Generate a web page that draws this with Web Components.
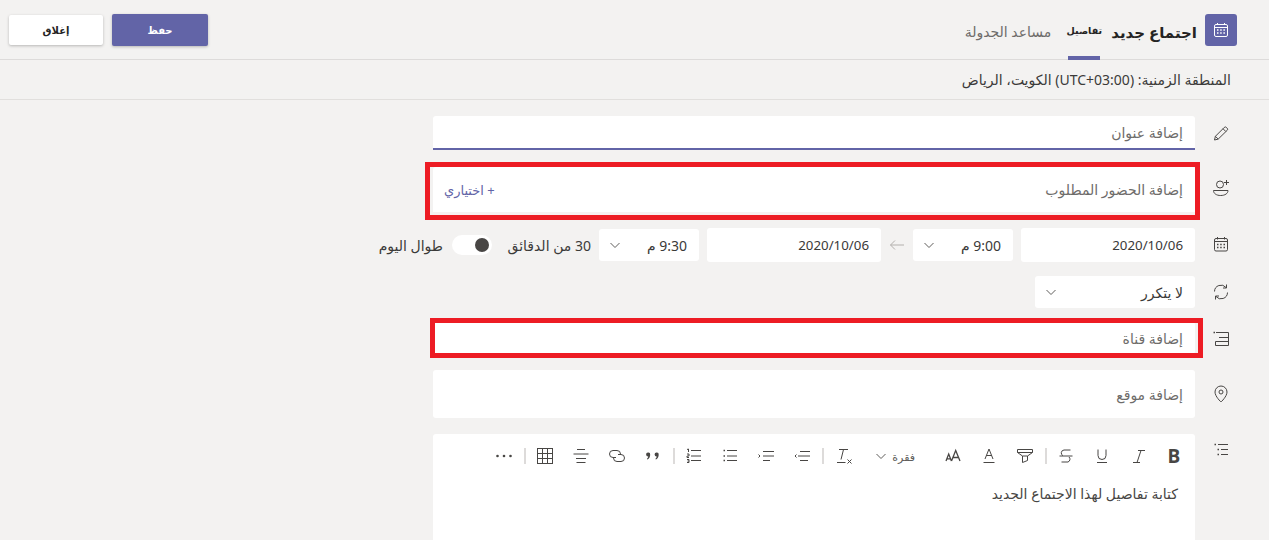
<!DOCTYPE html>
<html lang="ar" dir="rtl">
<head>
<meta charset="utf-8">
<title>اجتماع جديد</title>
<style>
html,body{margin:0;padding:0;background:#f3f2f1;height:100%;overflow:hidden}
body{font:14px "Noto Sans","Open Sans","DejaVu Sans",sans-serif;color:#3b3a39}
</style>
</head>
<body>
<meeting-form></meeting-form>
<script>
const S='fill="none" stroke="#484644" stroke-width="1"';
const ICONS={
 calendarW:`<svg width="16" height="16" viewBox="0 0 16 16" fill="none" stroke="#fff"><rect x="1.5" y="2.5" width="13" height="12" rx="1.5"/><path d="M1.5 5.5h13M4.5 1v2M11.5 1v2"/><path stroke-width="1.6" d="M4 8h1.5M7.2 8h1.5M10.4 8h1.5M4 11h1.5M7.2 11h1.5M10.4 11h1.5"/></svg>`,
 pencil:`<svg width="20" height="20" viewBox="0 0 20 20" ${S}><path d="M3.500 17l.9-3.700L13.200 4.500a1.600 1.600 0 0 1 2.300 0l.6.600a1.600 1.600 0 0 1 0 2.300L7.200 16.100z"/><path d="M4.400 13.300l2.800 2.800M12 5.700l2.800 2.800"/></svg>`,
 person:`<svg width="20" height="20" viewBox="0 0 20 20" ${S}><circle cx="9" cy="5.500" r="3.500"/><path d="M2.500 11.500h14.500c0 3-3 5-7.300 5s-7.200-2-7.200-5z"/><path d="M15.500 1v5M13 3.500h5"/></svg>`,
 calendar:`<svg width="20" height="20" viewBox="0 0 20 20" ${S}><rect x="3.500" y="3.500" width="13" height="12.500" rx="1.500"/><path d="M3.500 6.500h13M6.500 2v2.500M13.500 2v2.500"/><path stroke-width="1.500" d="M6 9.500h1.500M9.200 9.500h1.500M12.500 9.500h1.500M6 12.500h1.500M9.200 12.500h1.500M12.500 12.500h1.500"/></svg>`,
 repeat:`<svg width="20" height="20" viewBox="0 0 20 20" ${S}><path d="M3.500 9.500A6.500 6.500 0 0 1 15 5.500M15.500 2.500V6H12"/><path d="M16.500 10.500A6.500 6.500 0 0 1 5 14.500M4.500 17.500V14H8"/></svg>`,
 channel:`<svg width="20" height="20" viewBox="0 0 20 20" ${S}><path d="M5 4.500H17.500V17.500H4.500V13.500H17.500M8 9.500H17.500"/><path stroke-width="1.500" d="M2.500 4.500H4"/></svg>`,
 pin:`<svg width="20" height="20" viewBox="0 0 20 20" ${S}><path d="M10 18S4 12.500 4 8a6 6 0 0 1 12 0c0 4.500-6 10-6 10z"/><circle cx="10" cy="8" r="2"/></svg>`,
 list:`<svg width="20" height="20" viewBox="0 0 20 20" ${S}><path d="M7 4.500h10M10 9.500h7M10 14.500h7"/><path stroke-width="1.500" d="M3.500 4.500H5M6.500 9.500H8M6.500 14.500H8"/></svg>`,
 chev:`<svg width="12" height="12" viewBox="0 0 12 12" fill="none" stroke="#605e5c"><path d="M1.500 4l4.500 4.500L10.500 4"/></svg>`,
 arrow:`<svg width="16" height="12" viewBox="0 0 16 12" fill="none" stroke="#b3b0ad"><path d="M15 6H1.500M6 1.500L1.500 6 6 10.500"/></svg>`,
 italic:`<svg width="20" height="20" viewBox="0 0 20 20" ${S}><path d="M10 4.500h7M5 16.500h7M13 4.500L9 16.500"/></svg>`,
 underline:`<svg width="20" height="20" viewBox="0 0 20 20" ${S}><path d="M6 3.500v6a4 4 0 0 0 8 0v-6M5 16.500h10"/></svg>`,
 strike:`<svg width="20" height="20" viewBox="0 0 20 20" ${S}><path d="M14.500 4H8a3 3 0 0 0-1 5.700M3.500 10h13M13 11a3 3 0 0 1-1 5H5.500"/></svg>`,
 marker:`<svg width="20" height="20" viewBox="0 0 20 20" ${S}><path d="M2.500 3.500h15v3L12.500 10v4.500L7.500 16.500V10L2.500 6.500zM2.500 6.500h15M7.500 10h5"/></svg>`,
 fontcolor:`<svg width="20" height="20" viewBox="0 0 20 20" ${S}><path d="M6 13L10 3l4 10M7.300 9.500h5.400M4.500 16.500h11"/></svg>`,
 fontsize:`<svg width="20" height="20" viewBox="0 0 20 20" fill="none" stroke="#484644" stroke-width="1.300"><path d="M3 15l2.700-7 2.700 7M3.800 12.800h3.800M8.500 15L12.700 4.500 17 15M10 11.500h5.500"/></svg>`,
 clear:`<svg width="22" height="20" viewBox="0 0 22 20" ${S}><path d="M6 3.500h9M10.500 3.500L8 13.500M4 16.500h8.500M14.500 13.500l4 4M18.500 13.500l-4 4"/></svg>`,
 outdent:`<svg width="20" height="20" viewBox="0 0 20 20" ${S}><path d="M8 5.500h10M6 10h12M8 14.500h8M4.500 8.500L3 10l1.500 1.500"/></svg>`,
 indent:`<svg width="20" height="20" viewBox="0 0 20 20" ${S}><path d="M7 5.500h11M7 10h11M7 14.500h7M2.500 8.500L4 10l-1.500 1.500"/></svg>`,
 bullets:`<svg width="20" height="20" viewBox="0 0 20 20" ${S}><path d="M7 4.500h10M7 10h10M7 14.500h10"/><path stroke-width="1.500" d="M3.500 4.500H5M3.500 10H5M3.500 14.500H5"/></svg>`,
 numbers:`<svg width="20" height="20" viewBox="0 0 20 20" ${S}><path d="M7 4.500h10M7 10h10M7 14.500h10M3 3.500L4.500 3v3M3 8H5V10H3V11.500H5M3 13.500H5V16.500H3M3.500 15H5"/></svg>`,
 quote:`<svg width="20" height="20" viewBox="0 0 20 20" fill="#484644"><path d="M5 6.500a2 2 0 0 1 2.200 2.200c0 2.300-1.200 3.800-2.700 4.800l-.6-.6c.7-.7 1.300-1.600 1.300-2.400A2 2 0 0 1 5 6.500zM13.500 6.500a2 2 0 0 1 2.200 2.200c0 2.300-1.200 3.800-2.700 4.800l-.6-.6c.7-.7 1.300-1.600 1.300-2.400a2 2 0 0 1 -.2-4z"/></svg>`,
 link:`<svg width="20" height="20" viewBox="0 0 20 20" ${S}><path d="M9 11.500H6a3.500 3.500 0 0 1 0-7h4a3.500 3.500 0 0 1 3.500 3.500"/><path d="M11 8.500h3a3.500 3.500 0 0 1 0 7h-4a3.500 3.500 0 0 1-3.500-3.500"/></svg>`,
 align:`<svg width="20" height="20" viewBox="0 0 20 20" ${S}><path d="M6 3.500h8M2.500 8h15M5 12.500h10M5.500 16.500h9"/></svg>`,
 table:`<svg width="20" height="20" viewBox="0 0 20 20" ${S}><rect x="2.500" y="2.500" width="15" height="15"/><path d="M7.500 2.500v15M12.500 2.500v15M2.500 7.500h15M2.500 12.500h15"/></svg>`,
 dots:`<svg width="20" height="20" viewBox="0 0 20 20" fill="#484644"><circle cx="3.500" cy="10" r="1.300"/><circle cx="10" cy="10" r="1.300"/><circle cx="16.500" cy="10" r="1.300"/></svg>`
};
function def(name,css,html){
 customElements.define(name,class extends HTMLElement{
  constructor(){super();const r=this.attachShadow({mode:'open'});
   r.innerHTML=`<style>${css}</style>`+(typeof html==='function'?html(this):html);}
 });
}
def('x-icon',':host{display:inline-flex;align-items:center;justify-content:center;line-height:0}',
 el=>ICONS[el.getAttribute('name')]);

def('x-button',`:host{display:flex;align-items:center;justify-content:center;box-sizing:border-box;border-radius:2px;font-size:10px;font-weight:700;box-shadow:0 1px 3px rgba(0,0,0,.25)}
 :host([kind=primary]){width:96px;height:32px;background:#6264a7;color:#fff}
 :host([kind=plain]){width:94px;height:30px;background:#fff;color:#252423}`,'<slot></slot>');

def('meeting-header',`:host{display:flex;justify-content:space-between;height:60px;box-sizing:border-box;border-bottom:1px solid #dddbda;padding:0 32px 0 9px}
 .title{display:flex;height:59px;align-items:flex-start}
 .box{width:32px;height:32px;margin-top:14px;background:#6264a7;border-radius:3px;display:flex;align-items:center;justify-content:center}
 h1{margin:19px 8px 0 11px;font-size:15px;line-height:26px;font-weight:700;white-space:nowrap;color:#252423}
 .on{width:32px;box-sizing:border-box;height:60px;display:flex;justify-content:center;font-size:9.500px;font-weight:700;line-height:18px;padding-top:22px;border-bottom:4px solid #6264a7;margin-left:17px;white-space:nowrap;color:#252423}
 .off{font-size:14px;color:#6e6c6a;line-height:22px;padding-top:21px;white-space:nowrap}
 .btns{display:flex;gap:9px;align-items:center;height:60px}`,
 `<div class="title"><div class="box"><x-icon name="calendarW"></x-icon></div><h1>اجتماع جديد</h1>
  <div class="on">تفاصيل</div><div class="off">مساعد الجدولة</div></div>
  <div class="btns"><x-button kind="primary">حفظ</x-button><x-button kind="plain">إغلاق</x-button></div>`);

def('tz-bar',`:host{display:block;height:40px;box-sizing:border-box;border-bottom:1px solid #e1dfdd;padding-right:38px;font-size:14px;line-height:40px;color:#3b3a39}`,'<slot></slot>');

def('form-row',`:host{display:flex;align-items:flex-start;padding-right:38px;width:798px}
 .ic{width:20px;margin-left:16px;flex:none;display:flex;justify-content:center;align-items:center}
 .body{flex:1;min-width:0;position:relative}`,
 el=>`<div class="ic" style="height:${el.getAttribute('icon-h')||34}px"><slot name="icon"></slot></div><div class="body"><slot></slot></div>`);

def('text-field',`:host{display:flex;align-items:center;justify-content:space-between;box-sizing:border-box;background:#fff;border-radius:3px;padding:0 12px 0 11px;height:48px;color:#6e6c6a;font-size:14px}
 :host([h="34"]){height:34px}
 :host([soft]){border-bottom:3px solid #f7f0f0}
 :host([underline]){border-bottom:2px solid #6264a7;border-radius:3px 3px 0 0}
 :host([dark]){color:#3b3a39;font-size:13.300px}
 ::slotted([slot=end]){color:#6264a7;font-size:13px}`,'<slot></slot><slot name="end"></slot>');

def('red-mark',`:host{position:absolute;border:5px solid #ed1c24;box-sizing:border-box;pointer-events:none}`,'');

def('time-select',`:host{display:flex;align-items:center;justify-content:space-between;box-sizing:border-box;background:#fff;border-radius:3px;height:32px;padding:0 12px 0 10px;font-size:14px;color:#3b3a39}`,
 '<slot></slot><x-icon name="chev"></x-icon>');

def('x-toggle',`:host{display:flex;align-items:center;justify-content:flex-start;width:40px;height:20px;background:#fff;border-radius:10px;box-sizing:border-box;padding:0 3px}
 i{display:block;width:14px;height:14px;border-radius:50%;background:#484644}`,'<i></i>');

def('date-row',`:host{display:flex;align-items:center;height:34px;font-size:14px;color:#3b3a39;white-space:nowrap}
 ::slotted(*){flex:none}`,'<slot></slot>');

def('tool-bar',`:host{display:flex;align-items:center;height:44px;padding-right:3px;box-sizing:border-box}
 ::slotted(x-icon){width:36px;height:20px;flex:none}
 ::slotted(i){width:2px;height:16px;background:#dddbda;margin:0 1px 0 2px;flex:none}
 ::slotted(b){font:700 19px "Open Sans","Noto Sans",sans-serif;width:36px;text-align:center;color:#484644;flex:none}
 ::slotted(span){display:flex;align-items:center;width:73px;font-size:11px;color:#605e5c;gap:5px;padding-right:20px;box-sizing:border-box;flex:none}`,'<slot></slot>');

def('rich-editor',`:host{display:block;background:#fff;border-radius:3px 3px 0 0;height:130px}
 .txt{padding:5px 17px 0 0;font-size:14px;line-height:22px;color:#484644}`,
 `<slot name="tools"></slot><div class="txt"><slot></slot></div>`);

def('meeting-form',`:host{display:block}
 .r1{margin-top:16px}.r2{margin-top:17px}.r3{margin-top:13px}.r4{margin-top:14px}.r5{margin-top:14px}.r6{margin-top:16px}.r7{margin-top:16px}`,
 `<meeting-header></meeting-header>
 <tz-bar>المنطقة الزمنية: (UTC+03:00) الكويت، الرياض</tz-bar>
 <form-row class="r1"><x-icon slot="icon" name="pencil"></x-icon><text-field h="34" underline>إضافة عنوان</text-field></form-row>
 <form-row class="r2" icon-h="44"><x-icon slot="icon" name="person"></x-icon><text-field soft>إضافة الحضور المطلوب<span slot="end">+ اختياري</span></text-field><red-mark style="inset:-5px -5px -5px -8px"></red-mark></form-row>
 <form-row class="r3"><x-icon slot="icon" name="calendar"></x-icon>
  <date-row>
   <text-field h="34" dark style="width:174px">2020/10/06</text-field>
   <time-select style="width:100px;margin-right:8px">9:00 م</time-select>
   <x-icon name="arrow" style="width:32px"></x-icon>
   <text-field h="34" dark style="width:174px">2020/10/06</text-field>
   <time-select style="width:100px;margin-right:8px">9:30 م</time-select>
   <span style="margin-right:8px;width:81px">30 من الدقائق</span>
   <x-toggle style="margin-right:18px"></x-toggle>
   <span style="margin-right:9px">طوال اليوم</span>
  </date-row></form-row>
 <form-row class="r4" icon-h="32"><x-icon slot="icon" name="repeat"></x-icon><time-select style="width:160px">لا يتكرر</time-select></form-row>
 <form-row class="r5" icon-h="32"><x-icon slot="icon" name="channel"></x-icon><text-field style="height:32px">إضافة قناة</text-field><red-mark style="inset:-4px -8px -4px -3px"></red-mark></form-row>
 <form-row class="r6" icon-h="48"><x-icon slot="icon" name="pin"></x-icon><text-field>إضافة موقع</text-field></form-row>
 <form-row class="r7" icon-h="32"><x-icon slot="icon" name="list"></x-icon>
  <rich-editor><tool-bar slot="tools">
   <b>B</b><x-icon name="italic"></x-icon><x-icon name="underline"></x-icon><x-icon name="strike"></x-icon><i></i>
   <x-icon name="marker"></x-icon><x-icon name="fontcolor"></x-icon><x-icon name="fontsize"></x-icon>
   <span>فقرة <x-icon name="chev"></x-icon></span>
   <x-icon name="clear"></x-icon><i style="margin-right:2px"></i>
   <x-icon name="outdent"></x-icon><x-icon name="indent"></x-icon><x-icon name="bullets"></x-icon><x-icon name="numbers"></x-icon><i></i>
   <x-icon name="quote"></x-icon><x-icon name="link"></x-icon><x-icon name="align"></x-icon><x-icon name="table"></x-icon><i></i>
   <x-icon name="dots"></x-icon>
  </tool-bar>كتابة تفاصيل لهذا الاجتماع الجديد</rich-editor></form-row>`);
</script>
</body>
</html>
